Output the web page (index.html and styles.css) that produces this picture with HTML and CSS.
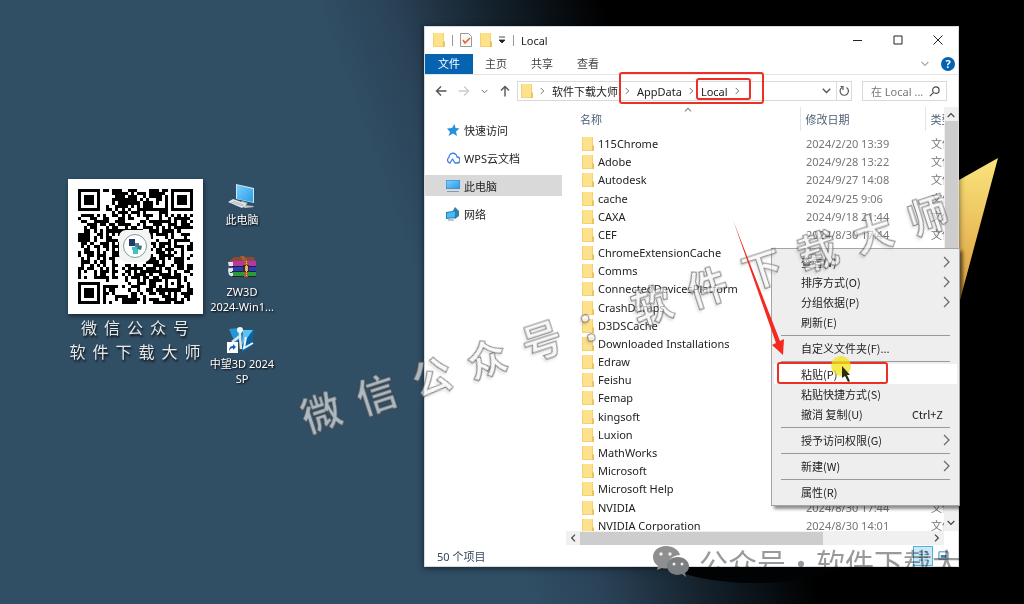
FILE: index.html
```
<!DOCTYPE html>
<html lang="zh-CN">
<head>
    <meta charset="utf-8">
    <title>Local</title>
    <link rel="stylesheet" href="styles.css">
</head>
<body>
    <!-- shared icons -->
    <svg class="defs" width="0" height="0">
        <linearGradient id="gold" x1="0" y1="0" x2="0" y2="1">
            <stop offset="0" stop-color="#fbe47c"/>
            <stop offset="1" stop-color="#d99a3c"/>
        </linearGradient>
        <linearGradient id="screen" x1="0" y1="0" x2="1" y2="1">
            <stop offset="0" stop-color="#7ad0fb"/>
            <stop offset="1" stop-color="#2a9be8"/>
        </linearGradient>
        <symbol id="folder" viewBox="0 0 12 14">
            <path d="M0 0h11v8l1 1v5H0z" fill="#f3d273"/>
            <path d="M1 0h9v13H1z" fill="#fde18b"/>
            <path d="M10 8l2 1v5h-2z" fill="#e9c45c"/>
        </symbol>
        <symbol id="right" viewBox="0 0 8 12">
            <path d="M1 1l5 5-5 5" fill="none" stroke="currentColor" stroke-width="1.2"/>
        </symbol>
        <symbol id="down" viewBox="0 0 12 8">
            <path d="M1 1l5 5 5-5" fill="none" stroke="currentColor" stroke-width="1.8"/>
        </symbol>
    </svg>

    <div class="desktop">
        <svg class="spike" viewBox="0 0 40 150"><path d="M0 22L39 0 0 146z" fill="url(#gold)"/></svg>
        <div class="hole"></div>

        <div class="qr-card">
            <div class="qr">
                <svg id="qr" viewBox="0 0 37 37" shape-rendering="crispEdges"></svg>
                <svg class="qr-logo" viewBox="0 0 32 32">
                    <rect width="32" height="32" rx="7" fill="#f4f4f4"/>
                    <circle cx="16" cy="16" r="11.5" fill="#fff" stroke="#7d9fa0"/>
                    <path d="M10 9h6v7h-6z" fill="#1d3c66"/>
                    <path d="M16 13h4v4h-4z" fill="#5d7f96"/>
                    <path d="M13 17h6v7h-5v-4h-1z" fill="#3cc4c4"/>
                    <path d="M19 15l4 1-1 4-4-1z" fill="#34797d"/>
                </svg>
            </div>
            <div class="caption"><span>微</span><span>信</span><span>公</span><span>众</span><span>号</span></div>
            <div class="caption"><span>软</span><span>件</span><span>下</span><span>载</span><span>大</span><span>师</span></div>
        </div>

        <div class="shortcuts">
            <a class="shortcut" href="#">
                <svg viewBox="0 0 30 28">
                    <path d="M9 2l18 4v15L9 17z" fill="#c9e8f7"/>
                    <path d="M10 3l16 4v13l-16-3z" fill="url(#screen)"/>
                    <path d="M15 19l6 2-4 2 9 1 1 1-9 1-6-3z" fill="#b9c6ce"/>
                    <path d="M1 20l5-3 14 5-5 4z" fill="#e6e9eb"/>
                    <path d="M4 20l12 4M6 19l11 4" stroke="#9ba8b1" stroke-width=".7"/>
                </svg>
                <span>此电脑</span>
            </a>
            <a class="shortcut" href="#">
                <svg viewBox="0 0 30 28">
                    <path d="M1 8l6-5h20l2 5z" fill="#8a4a35"/>
                    <path d="M5 7h24v6H5z" fill="#b8369f"/>
                    <path d="M5 13h24v5H5z" fill="#263fc0"/>
                    <path d="M5 18h24v5H5z" fill="#2a9a3a"/>
                    <path d="M1 8h5v4H2v2h4v4H3v1h3v4l-4-2-1-5 1-3z" fill="#e8e2ee"/>
                    <path d="M5 12.500h24M5 17.500h24M5 22.500h24" stroke="#222"/>
                    <path d="M13 2h4l4 6v15h-4V8z" fill="#a85f2d"/>
                    <path d="M16 11h6v7h-6z" fill="#3b2a20"/>
                    <path d="M18 12h3v5h-3z" fill="#e4b264"/>
                    <path d="M19.500 7v16" stroke="#efc080" stroke-dasharray="1 1"/>
                </svg>
                <span>ZW3D<br>2024-Win1...</span>
            </a>
            <a class="shortcut" href="#">
                <svg viewBox="0 0 30 28">
                    <path d="M2 3l10-1 3 9-7 6z" fill="#2497d8"/>
                    <path d="M15 4l12-1-2 17-10 7z" fill="#0d639f"/>
                    <path d="M16 4h10L15 19z" fill="#5ac3f2"/>
                    <path d="M19 11l-2 11 9-5" fill="none" stroke="#e9f6ff" stroke-width="2"/>
                    <path d="M13 3v7l-8 6M13 10l1 13" fill="none" stroke="#d8e9ef" stroke-width="2.500"/>
                    <circle cx="13" cy="4" r="3" fill="#eef7f8"/>
                    <path d="M0 16h11v11H0z" fill="#fff"/>
                    <path d="M2 25c0-4 2-5 4-5v-2l3 3-3 3v-2c-2 0-3 1-4 3z" fill="#195fb5"/>
                </svg>
                <span>中望3D 2024<br>SP</span>
            </a>
        </div>

        <div class="window">
            <div class="titlebar">
                <svg class="folder"><use href="#folder"/></svg>
                <i class="bar"></i>
                <svg class="check" viewBox="0 0 12 14"><path d="M.5.5h8l3 3v10H.5z" fill="#fafafa" stroke="#999"/><path d="M3 7l2 3 5-5" fill="none" stroke="#e5672c" stroke-width="1.600"/></svg>
                <svg class="folder"><use href="#folder"/></svg>
                <svg class="more" viewBox="0 0 8 8"><path d="M1 1h6M1 4h6L4 7z" fill="#222" stroke="#222" stroke-width=".8"/></svg>
                <i class="bar"></i>
                <span class="title">Local</span>
                <div class="controls">
                    <button aria-label="最小化"><svg viewBox="0 0 10 10"><path d="M0 5.500h9"/></svg></button>
                    <button aria-label="最大化"><svg viewBox="0 0 10 10"><path d="M1 1h8v8H1z"/></svg></button>
                    <button aria-label="关闭"><svg viewBox="0 0 10 10"><path d="M.5.5l9 9M9.500.5l-9 9"/></svg></button>
                </div>
            </div>

            <div class="tabs">
                <button class="tab file">文件</button>
                <button class="tab">主页</button>
                <button class="tab">共享</button>
                <button class="tab">查看</button>
                <svg class="fold"><use href="#down"/></svg>
                <button class="help" aria-label="帮助">?</button>
            </div>

            <div class="address">
                <div class="nav-buttons">
                    <button aria-label="后退"><svg viewBox="0 0 12 12"><path d="M11.500 6H1.500M6 1.500L1.500 6 6 10.500"/></svg></button>
                    <button class="off" aria-label="前进"><svg viewBox="0 0 12 12"><path d="M.5 6h10M6 1.500L10.500 6 6 10.500"/></svg></button>
                    <button class="small" aria-label="最近"><svg viewBox="0 0 12 12"><path d="M1 4l5 5 5-5"/></svg></button>
                    <button aria-label="向上"><svg viewBox="0 0 12 12"><path d="M6 11.500v-10M2 5.500l4-4 4 4"/></svg></button>
                </div>
                <div class="path">
                    <svg class="folder"><use href="#folder"/></svg>
                    <svg class="sep"><use href="#right"/></svg>
                    <a href="#">软件下载大师</a>
                    <svg class="sep"><use href="#right"/></svg>
                    <a href="#">AppData</a>
                    <svg class="sep"><use href="#right"/></svg>
                    <a href="#">Local</a>
                    <svg class="sep"><use href="#right"/></svg>
                    <svg class="drop"><use href="#down"/></svg>
                    <button class="reload" aria-label="刷新"><svg viewBox="0 0 12 12"><path d="M4 2.500A4.200 4.200 0 1 0 8.500 2.500M2.500 1.500H5V5" fill="none" stroke="#555" stroke-width="1.200"/></svg></button>
                </div>
                <div class="search">
                    <input type="text" aria-label="搜索" placeholder="在 Local ...">
                    <svg viewBox="0 0 12 12"><circle cx="7.500" cy="4.500" r="3.500"/><path d="M5 7L1 11"/></svg>
                </div>
            </div>

            <div class="main">
                <nav class="sidebar">
                    <a href="#">
                        <svg viewBox="0 0 14 14"><path d="M8.500 1l1 4 4 .5-3.500 3 1 4.500L7 10.500 2.500 13 4 9 1 5.500 6 5z" fill="#2492dc"/></svg>
                        快速访问
                    </a>
                    <a href="#">
                        <svg viewBox="0 0 14 14"><path d="M4 12A3 3 0 0 1 3 6.500 4 4 0 0 1 11 6a3 3 0 0 1 0 6H9L6.500 8 4 12z" fill="none" stroke="#3b7fe0" stroke-width="1.300" stroke-linejoin="round"/></svg>
                        WPS云文档
                    </a>
                    <a class="selected" href="#">
                        <svg viewBox="0 0 14 14"><path d="M0 1h14v9H0z" fill="#3b8fc4"/><path d="M.7 1.700h12.600v7.600H.7z" fill="url(#screen)"/><path d="M1 12.500h12" stroke="#8d9aa5"/></svg>
                        此电脑
                    </a>
                    <a href="#">
                        <svg viewBox="0 0 14 14"><path d="M9 0l4 4v5l-4 3-4-5z" fill="#3181a8"/><path d="M0 5l10-1.500V11L0 12z" fill="#267cb8"/><path d="M1 6l8-1.500v5.500l-8 1z" fill="#4bb9f4"/><path d="M2 13h6" stroke="#7b8d99"/></svg>
                        网络
                    </a>
                </nav>

                <div class="content">
                    <div class="list">
                        <svg class="sort"><use href="#down"/></svg>
                        <table>
                            <thead>
                                <tr><th class="name">名称</th><th class="date">修改日期</th><th>类型</th></tr>
                            </thead>
                            <tbody>
                                <tr><td><svg class="folder"><use href="#folder"/></svg>115Chrome</td><td>2024/2/20 13:39</td><td>文件夹</td></tr>
                                <tr><td><svg class="folder"><use href="#folder"/></svg>Adobe</td><td>2024/9/28 13:22</td><td>文件夹</td></tr>
                                <tr><td><svg class="folder"><use href="#folder"/></svg>Autodesk</td><td>2024/9/27 14:08</td><td>文件夹</td></tr>
                                <tr><td><svg class="folder"><use href="#folder"/></svg>cache</td><td>2024/9/25 9:06</td><td>文件夹</td></tr>
                                <tr><td><svg class="folder"><use href="#folder"/></svg>CAXA</td><td>2024/9/18 21:44</td><td>文件夹</td></tr>
                                <tr><td><svg class="folder"><use href="#folder"/></svg>CEF</td><td>2024/8/30 17:44</td><td>文件夹</td></tr>
                                <tr><td><svg class="folder"><use href="#folder"/></svg>ChromeExtensionCache</td><td></td><td></td></tr>
                                <tr><td><svg class="folder"><use href="#folder"/></svg>Comms</td><td></td><td></td></tr>
                                <tr><td><svg class="folder"><use href="#folder"/></svg>ConnectedDevicesPlatform</td><td></td><td></td></tr>
                                <tr><td><svg class="folder"><use href="#folder"/></svg>CrashDumps</td><td></td><td></td></tr>
                                <tr><td><svg class="folder"><use href="#folder"/></svg>D3DSCache</td><td></td><td></td></tr>
                                <tr><td><svg class="folder"><use href="#folder"/></svg>Downloaded Installations</td><td></td><td></td></tr>
                                <tr><td><svg class="folder"><use href="#folder"/></svg>Edraw</td><td></td><td></td></tr>
                                <tr><td><svg class="folder"><use href="#folder"/></svg>Feishu</td><td></td><td></td></tr>
                                <tr><td><svg class="folder"><use href="#folder"/></svg>Femap</td><td></td><td></td></tr>
                                <tr><td><svg class="folder"><use href="#folder"/></svg>kingsoft</td><td></td><td></td></tr>
                                <tr><td><svg class="folder"><use href="#folder"/></svg>Luxion</td><td></td><td></td></tr>
                                <tr><td><svg class="folder"><use href="#folder"/></svg>MathWorks</td><td></td><td></td></tr>
                                <tr><td><svg class="folder"><use href="#folder"/></svg>Microsoft</td><td></td><td></td></tr>
                                <tr><td><svg class="folder"><use href="#folder"/></svg>Microsoft Help</td><td></td><td></td></tr>
                                <tr><td><svg class="folder"><use href="#folder"/></svg>NVIDIA</td><td>2024/8/30 17:44</td><td>文件夹</td></tr>
                                <tr><td><svg class="folder"><use href="#folder"/></svg>NVIDIA Corporation</td><td>2024/8/30 14:01</td><td>文件夹</td></tr>
                            </tbody>
                        </table>
                    </div>
                    <div class="vscroll">
                        <svg class="up"><use href="#down"/></svg>
                        <div class="thumb"></div>
                        <svg><use href="#down"/></svg>
                    </div>
                    <div class="hscroll">
                        <svg class="left"><use href="#down"/></svg>
                        <div class="thumb"></div>
                        <svg class="right"><use href="#down"/></svg>
                    </div>
                </div>
            </div>

            <div class="status">
                <span>50 个项目</span>
                <button class="view on" aria-label="详细信息"><svg viewBox="0 0 12 12"><path d="M1 2h4M7 2h4M1 5h4M7 5h4M1 8h4M7 8h4M1 11h4M7 11h4"/></svg></button>
                <button class="view" aria-label="大图标"><svg viewBox="0 0 12 12"><path d="M1 2h10v8H1z"/><path d="M3 7h6" stroke-width="3"/></svg></button>
            </div>
        </div>

        <div class="menu">
            <button>查看(V)<svg><use href="#right"/></svg></button>
            <button>排序方式(O)<svg><use href="#right"/></svg></button>
            <button>分组依据(P)<svg><use href="#right"/></svg></button>
            <button>刷新(E)</button>
            <hr>
            <button>自定义文件夹(F)...</button>
            <hr>
            <button class="hover">粘贴(P)</button>
            <button>粘贴快捷方式(S)</button>
            <button>撤消 复制(U)<span>Ctrl+Z</span></button>
            <hr>
            <button>授予访问权限(G)<svg><use href="#right"/></svg></button>
            <hr>
            <button>新建(W)<svg><use href="#right"/></svg></button>
            <hr>
            <button>属性(R)</button>
        </div>

        <div class="watermark">
            <span>微</span><span>信</span><span>公</span><span>众</span><span>号</span><span>：</span><span>软</span><span>件</span><span>下</span><span>载</span><span>大</span><span>师</span>
        </div>

        <!-- highlights -->
        <div class="mark mark-path"></div>
        <div class="mark mark-local"></div>
        <div class="mark mark-paste"></div>
        <svg class="arrow" viewBox="0 0 54 136"><path d="M1 0L48 121l4-2-1 16-11-10 4-2z" fill="#f5291f"/></svg>
        <div class="spot"></div>
        <svg class="cursor" viewBox="0 0 10 16"><path d="M1 0l8 9H6l3 6-2 1-3-6-3 2z" fill="#2b2d12"/></svg>

        <div class="account">
            <svg viewBox="0 0 38 34">
                <path d="M14 1C6 1 1 6 1 12c0 4 2 7 5 9l-1 4 5-2c2 .5 4 1 6 0-1-8 5-13 12-13C27 5 21 1 14 1z" fill="#8f8f8f"/>
                <path d="M26 12c-7 0-11 4-11 9s5 9 11 9l4-1 4 3-1-4c3-2 4-4 4-7 0-5-5-9-11-9z" fill="#7c7f82"/>
                <g fill="#eee"><circle cx="9" cy="9" r="1.700"/><circle cx="18" cy="9" r="1.700"/><circle cx="22" cy="19" r="1.500"/><circle cx="30" cy="19" r="1.500"/></g>
            </svg>
            <div class="account-name">公众号<span>·</span>软件下载大师</div>
        </div>
    </div>

    <script src="script.js"></script>
</body>
</html>
```
FILE: styles.css
```
* {
    box-sizing: border-box;
}
body {
    margin: 0;
    font-family: "Noto Sans", "Noto Sans CJK SC", sans-serif;
    font-size: 11px;
    color: #222;
}
button, input {
    font: inherit;
    color: inherit;
    border: none;
    background: none;
    padding: 0;
    margin: 0;
}
a {
    color: inherit;
    text-decoration: none;
}
svg {
    display: block;
    flex: none;
}
.defs {
    position: absolute;
}
.desktop {
    position: relative;
    height: 100vh;
    overflow: hidden;
    background: linear-gradient(70deg, #304e64 43%, #2a4257 49%, #14212b 57%, #000 66%);
}
.spike {
    position: absolute;
    left: 959px;
    top: 158px;
    width: 40px;
    height: 150px;
}
.hole {
    position: absolute;
    left: 655px;
    top: 520px;
    width: 200px;
    height: 63px;
    border-radius: 50%;
    background: #020304;
}

/* desktop items */
.qr-card {
    position: absolute;
    left: 67px;
    top: 179px;
    width: 136px;
    display: flex;
    flex-direction: column;
    align-items: center;
}
.qr {
    position: relative;
    width: 135px;
    padding: 10px;
    margin-bottom: 2px;
    background: #fff;
    box-shadow: 1px 2px 4px rgba(0, 0, 0, 0.5);
}
.qr-logo {
    position: absolute;
    left: 51px;
    top: 51px;
    width: 32px;
    height: 32px;
}
.caption {
    display: flex;
    gap: 7px;
    font-size: 16px;
    line-height: 24px;
    color: #e4e9ec;
    text-shadow: 1px 2px 2px #111;
}
.shortcuts {
    position: absolute;
    left: 202px;
    top: 182px;
    width: 80px;
    display: flex;
    flex-direction: column;
    gap: 12px;
}
.shortcut {
    min-height: 60px;
    display: flex;
    flex-direction: column;
    align-items: center;
    gap: 2px;
    line-height: 15px;
    text-align: center;
    white-space: nowrap;
    color: #fff;
    text-shadow: 1px 1px 2px #000;
}
.shortcut svg {
    width: 30px;
    height: 28px;
}

/* explorer window */
.window {
    position: absolute;
    left: 424px;
    right: 65px;
    top: 26px;
    bottom: 37px;
    display: flex;
    flex-direction: column;
    background: #fff;
    border: 1px solid #d5dbe0;
    box-shadow: 0 1px 6px rgba(0, 0, 0, 0.6);
}
.folder {
    width: 12px;
    height: 14px;
}
.titlebar {
    display: flex;
    align-items: center;
    height: 26px;
    padding-left: 8px;
}
.bar {
    width: 1px;
    height: 11px;
    margin: 0 7px;
    background: #999;
}
.check {
    width: 12px;
    height: 14px;
    margin-right: 8px;
}
.more {
    width: 8px;
    height: 8px;
    margin-left: 6px;
}
.title {
    flex: 1;
}
.controls {
    display: flex;
}
.controls button {
    width: 40px;
    display: flex;
    justify-content: center;
}
.controls svg {
    width: 10px;
    height: 10px;
    fill: none;
    stroke: #222;
}
.tabs {
    display: flex;
    align-items: center;
    height: 22px;
    border-bottom: 1px solid #e4e4e4;
    color: #444;
}
.tab {
    width: 46px;
    height: 20px;
    line-height: 20px;
}
.tab.file {
    width: 48px;
    background: #0563b1;
    color: #fff;
}
.fold {
    width: 8px;
    height: 6px;
    margin-left: auto;
    margin-right: 12px;
    color: #aaa;
}
.help {
    width: 14px;
    height: 14px;
    margin-right: 3px;
    border-radius: 50%;
    background: #0563b1;
    color: #fff;
    font-weight: bold;
    line-height: 14px;
}
.address {
    display: flex;
    align-items: center;
    height: 32px;
    padding-right: 11px;
}
.nav-buttons {
    display: flex;
    align-items: center;
    justify-content: space-between;
    width: 92px;
    padding: 0 6px 0 10px;
}
.nav-buttons svg {
    width: 12px;
    height: 12px;
    fill: none;
    stroke: #555;
    stroke-width: 1.4;
}
.nav-buttons .off svg {
    stroke: #ccc;
}
.nav-buttons .small svg {
    width: 7px;
}
.path {
    flex: 1;
    display: flex;
    align-items: center;
    height: 20px;
    padding-left: 3px;
    border: 1px solid #d9d9d9;
    white-space: nowrap;
}
.sep {
    width: 5px;
    height: 8px;
    margin: 0 7px;
    color: #444;
}
.drop {
    width: 9px;
    height: 6px;
    margin-left: auto;
    margin-right: 5px;
    color: #555;
}
.reload {
    height: 18px;
    padding: 0 1px;
    border-left: 1px solid #d9d9d9;
}
.reload svg {
    width: 12px;
    height: 12px;
}
.search {
    display: flex;
    align-items: center;
    width: 85px;
    height: 20px;
    margin-left: 10px;
    padding: 0 6px 0 8px;
    border: 1px solid #d9d9d9;
}
.search input {
    flex: 1;
    min-width: 0;
}
.search input::placeholder {
    color: #777;
}
.search svg {
    width: 11px;
    height: 11px;
    fill: none;
    stroke: #444;
    stroke-width: 1.3;
}
.main {
    flex: 1;
    min-height: 0;
    display: flex;
}
.sidebar {
    width: 137px;
    margin-right: 4px;
    padding-top: 12px;
    display: flex;
    flex-direction: column;
    gap: 7px;
}
.sidebar a {
    display: flex;
    align-items: center;
    gap: 4px;
    height: 21px;
    padding-left: 21px;
}
.sidebar svg {
    width: 14px;
    height: 14px;
}
.sidebar .selected {
    background: #d9d9d9;
}
.content {
    flex: 1;
    min-width: 0;
    display: grid;
    grid-template-columns: 1fr 14px;
    grid-template-rows: 1fr 14px;
}
.list {
    position: relative;
    overflow: hidden;
}
.sort {
    position: absolute;
    left: 118px;
    top: 0;
    width: 8px;
    height: 5px;
    transform: rotate(180deg);
    color: #888;
}
table {
    width: 100%;
    height: 428px;
    table-layout: fixed;
    border-collapse: collapse;
}
th {
    height: 24px;
    padding: 0 0 0 5px;
    text-align: left;
    font-weight: normal;
    color: #4c6075;
    border-left: 1px solid #e4e4e4;
    white-space: nowrap;
}
th.name {
    width: 234px;
    padding-left: 14px;
    border: none;
}
th.date {
    width: 125px;
}
thead::after {
    content: "";
    display: block;
    height: 4px;
}
td {
    height: 18px;
    padding: 0 0 0 6px;
    line-height: 16px;
    color: #777;
    white-space: nowrap;
    overflow: hidden;
}
td:first-child {
    padding-left: 16px;
    color: #222;
}
td .folder {
    display: inline-block;
    vertical-align: -3px;
    margin-right: 4px;
}
.vscroll, .hscroll {
    display: flex;
    align-items: center;
    background: #f0f0f0;
}
.vscroll {
    flex-direction: column;
    justify-content: space-between;
    padding: 5px 0;
}
.vscroll .thumb {
    width: 13px;
    height: 220px;
    margin: 3px 0 auto;
    background: #cdcdcd;
}
.vscroll svg, .hscroll svg {
    width: 8px;
    height: 6px;
    color: #444;
}
.vscroll .up {
    transform: rotate(180deg);
}
.hscroll {
    padding: 0 3px;
}
.hscroll .thumb {
    width: 243px;
    height: 13px;
    margin: 0 auto 0 3px;
    background: #cdcdcd;
}
.hscroll .left {
    transform: rotate(90deg);
}
.hscroll .right {
    transform: rotate(-90deg);
}
.status {
    display: flex;
    align-items: center;
    height: 21px;
    padding: 0 5px 0 12px;
    color: #33485c;
}
.status span {
    flex: 1;
}
.view {
    width: 20px;
    height: 20px;
    display: flex;
    align-items: center;
    justify-content: center;
}
.view.on {
    background: #cce8f6;
    border: 1px solid #4fb3dc;
}
.view svg {
    width: 11px;
    height: 11px;
    fill: none;
    stroke: #3f7ea5;
}

/* context menu */
.menu {
    position: absolute;
    left: 771px;
    top: 248px;
    width: 189px;
    padding: 3px 2px;
    background: #eee;
    border: 1px solid #a5a5a5;
    box-shadow: 3px 3px 3px rgba(0, 0, 0, 0.45);
    font-family: "Noto Sans CJK SC", sans-serif;
}
.menu button {
    display: flex;
    align-items: center;
    justify-content: space-between;
    width: 100%;
    height: 20px;
    padding: 0 6px 0 27px;
}
.menu button span {
    margin-right: 8px;
}
.menu svg {
    width: 8px;
    height: 12px;
    color: #666;
}
.menu .hover {
    background: #fff;
}
.menu hr {
    height: 1px;
    margin: 3px 7px 2px;
    border: none;
    background: #999;
}

/* overlays */
.watermark {
    position: absolute;
    left: 285px;
    top: 284px;
    display: flex;
    gap: 18px;
    font-family: "Noto Sans CJK SC", sans-serif;
    font-size: 40px;
    font-weight: bold;
    line-height: 56px;
    color: rgba(255, 255, 255, 0.6);
    -webkit-text-stroke: 1px rgba(50, 50, 50, 0.6);
    filter: drop-shadow(-2px 2px 1px rgba(80, 80, 80, 0.2));
    transform: rotate(-18deg);
}
.mark {
    position: absolute;
    border: 2px solid #ee3024;
    border-radius: 3px;
}
.mark-path {
    left: 619px;
    top: 72px;
    width: 145px;
    height: 32px;
}
.mark-local {
    left: 696px;
    top: 78px;
    width: 55px;
    height: 22px;
}
.mark-paste {
    left: 777px;
    top: 362px;
    width: 111px;
    height: 22px;
}
.arrow {
    position: absolute;
    left: 732px;
    top: 220px;
    width: 54px;
    height: 136px;
}
.spot {
    position: absolute;
    left: 831px;
    top: 356px;
    width: 20px;
    height: 20px;
    border-radius: 50%;
    background: rgba(240, 228, 20, 0.75);
}
.cursor {
    position: absolute;
    left: 841px;
    top: 366px;
    width: 10px;
    height: 16px;
}
.account {
    position: absolute;
    left: 652px;
    top: 542px;
    display: flex;
    align-items: center;
    gap: 9px;
}
.account svg {
    width: 38px;
    height: 34px;
}
.account-name {
    display: flex;
    font-family: "Noto Sans CJK SC", sans-serif;
    font-size: 29px;
    line-height: 40px;
    white-space: nowrap;
    color: #999;
    mix-blend-mode: multiply;
}
.account-name span {
    width: 30px;
    text-align: center;
}
```
FILE: script.js
```
const size = 37;
let seed = 20240;

function random() {
    seed = (seed * 1103515245 + 12345) % 2147483648;
    return seed / 2147483648;
}

// square rings used in the corners (7 wide) and near the bottom right (5 wide)
function ring(x, y, left, top, width) {
    let half = (width - 1) / 2;
    let d = Math.max(Math.abs(x - left - half), Math.abs(y - top - half));
    if (d > half + (width === 7 ? 1 : 0)) return null;
    return d === half || d <= half - 2;
}

let path = '';
for (let y = 0; y < size; y++) {
    for (let x = 0; x < size; x++) {
        let noise = random() < 0.53;
        let fixed = [
            ring(x, y, 0, 0, 7),
            ring(x, y, size - 7, 0, 7),
            ring(x, y, 0, size - 7, 7),
            ring(x, y, 28, 28, 5)
        ].find(value => value !== null);
        if (fixed === undefined ? noise : fixed) {
            path += `M${x} ${y}h1v1h-1z`;
        }
    }
}
document.getElementById('qr').innerHTML = `<path d="${path}"/>`;
```
